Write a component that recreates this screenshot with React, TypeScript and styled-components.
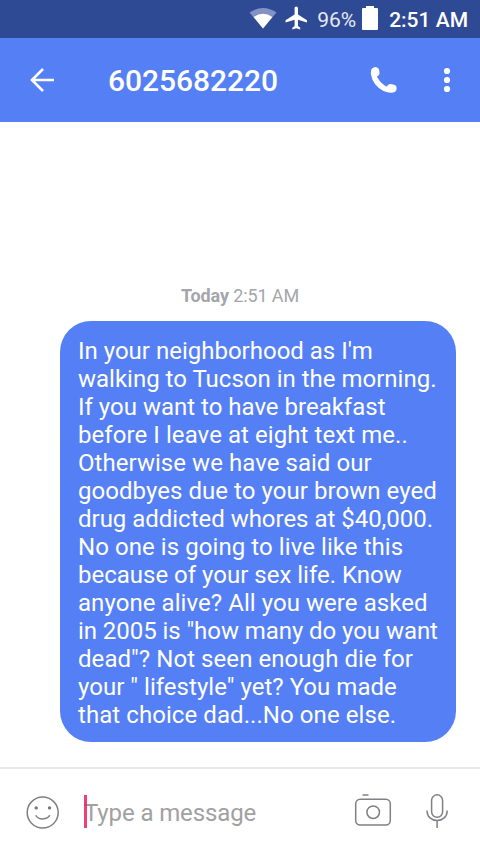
import React from "react";
import styled, { createGlobalStyle } from "styled-components";

const GlobalStyle = createGlobalStyle`
  * { box-sizing: border-box; }
  body { margin: 0; background: #fff; font-family: Roboto, "Liberation Sans", sans-serif; }
`;

const Screen = styled.div`
  width: 480px;
  height: 854px;
  display: flex;
  flex-direction: column;
  background: #fff;
  overflow: hidden;
`;

const StatusBar = styled.div`
  height: 38px;
  flex: none;
  display: flex;
  align-items: center;
  justify-content: flex-end;
  padding: 0 12px 2px 0;
  background: #2f4a95;
  color: #fff;
`;

const StatusText = styled.span<{ $strong?: boolean }>`
  height: 36px;
  padding-top: 2px;
  font-size: 21px;
  line-height: 36px;
  font-weight: ${(p) => (p.$strong ? 500 : 400)};
  opacity: ${(p) => (p.$strong ? 1 : 0.88)};
  white-space: nowrap;
`;

const Icon = styled.svg<{ $right?: number }>`
  display: block;
  flex: none;
  margin-right: ${(p) => p.$right ?? 0}px;
`;

const Header = styled.header`
  height: 84px;
  flex: none;
  display: flex;
  align-items: center;
  padding: 0 27px;
  background: #5580f5;
  color: #fff;
`;

const Title = styled.h1`
  flex: 1;
  margin: 0 0 0 51px;
  font-size: 30px;
  line-height: 36px;
  font-weight: 500;
  letter-spacing: -0.06px;
  padding-top: 1px;
`;

const Conversation = styled.main`
  flex: 1;
  display: flex;
  flex-direction: column;
  justify-content: flex-end;
  padding: 0 24px 25px 60px;
`;

const Timestamp = styled.div`
  margin: 0 24px 14px -12px;
  text-align: center;
  font-size: 18px;
  line-height: 22px;
  letter-spacing: -0.12px;
  color: #a4a6aa;
`;

const Bubble = styled.div`
  height: 421px;
  padding: 16px 0 13px 18px;
  border-radius: 31px;
  background: #5580f5;
  color: #fff;
`;

const Line = styled.div<{ $tracking: number }>`
  font-size: 24px;
  line-height: 28px;
  letter-spacing: ${(p) => p.$tracking}px;
  white-space: pre;
`;

const Composer = styled.footer`
  height: 87px;
  flex: none;
  display: flex;
  align-items: center;
  border-top: 2px solid #e9e9e9;
  padding: 0 31px 0 26px;
`;

const MessageField = styled.div`
  flex: 1;
  position: relative;
  margin-left: 24px;
  padding-top: 4px;
  font-size: 24px;
  line-height: 33px;
  letter-spacing: -0.12px;
  color: #a1a1a1;
`;

const Caret = styled.span`
  position: absolute;
  left: 0;
  top: 2px;
  width: 3px;
  height: 33px;
  background: #e91e63;
  opacity: 0.85;
`;

const lines: [string, number][] = [
  ["In your neighborhood as I'm", 0],
  ["walking to Tucson in the morning.", 0],
  ["If you want to have breakfast", 0],
  ["before I leave at eight text me..", 0.07],
  ["Otherwise we have said our", 0.05],
  ["goodbyes due to your brown eyed", 0.05],
  ["drug addicted whores at $40,000.", -0.02],
  ["No one is going to live like this", 0.07],
  ["because of your sex life. Know", 0],
  ["anyone alive? All you were asked", 0.06],
  ["in 2005 is \"how many do you want", -0.06],
  ["dead\"? Not seen enough die for", 0.06],
  ["your \" lifestyle\" yet? You made", 0.03],
  ["that choice dad...No one else.", 0.07],
];

export default function App() {
  return (
    <>
      <GlobalStyle />
      <Screen>
        <StatusBar>
          <Icon $right={8} width="28" height="24" viewBox="0 -1 28 24">
            <path d="M14 21.500 L.5 5.500 Q14-3.500 27.500 5.500Z" fill="#8392c4" />
            <path d="M14 21.500 L4.600 10 Q14 3.500 23.400 10Z" fill="#fff" />
          </Icon>
          <Icon $right={10} width="22" height="24" viewBox="1.500 1.500 19.500 21" preserveAspectRatio="none" fill="#fff">
            <path d="M21 16v-2l-8-5V3.500c0-.83-.67-1.500-1.500-1.500S10 2.670 10 3.500V9l-8 5v2l8-2.500V19l-2 1.500V22l3.500-1 3.500 1v-1.500L13 19v-5.500l8 2.500z" />
          </Icon>
          <StatusText>96%</StatusText>
          <Icon $right={11} width="22" height="24" viewBox="-6 0 22 24">
            <path d="M4 0h8v2h3q1 0 1 1v20q0 1-1 1H1q-1 0-1-1V3q0-1 1-1h3z" fill="#fff" />
          </Icon>
          <StatusText $strong>2:51 AM</StatusText>
        </StatusBar>

        <Header>
          <Icon width="30" height="30" viewBox="0 0 30 30" fill="none" stroke="#fff" strokeWidth="2.600">
            <path d="M27 15H5M16 4L5 15l11 11" />
          </Icon>
          <Title>6025682220</Title>
          <Icon $right={43} width="28" height="28" viewBox="0 0 28 28">
            <path
              d="M1.800 2.800Q5.500-.8 8.500 2.500Q10 5.500 9.200 8.500Q8.600 10 6.900 10.300Q9.400 16.500 16.600 20.800Q17.500 18.500 20 18Q24 18.200 26 19.800Q27.600 23.500 25 26Q20 28 13.500 25Q3 19.500 1.100 9Q.4 4.800 1.800 2.800Z"
              fill="#fff"
            />
          </Icon>
          <Icon width="12" height="28" viewBox="0 0 12 28" fill="#fff">
            <circle cx="6" cy="5" r="3.100" />
            <circle cx="6" cy="14" r="3.100" />
            <circle cx="6" cy="23" r="3.100" />
          </Icon>
        </Header>

        <Conversation>
          <Timestamp>
            <b>Today</b> 2:51 AM
          </Timestamp>
          <Bubble>
            {lines.map(([text, tracking]) => (
              <Line key={text} $tracking={tracking}>
                {text}
              </Line>
            ))}
          </Bubble>
        </Conversation>

        <Composer>
          <Icon width="34" height="34" viewBox="0 0 34 34" fill="none" stroke="#808084" strokeWidth="1.500">
            <circle cx="16.700" cy="17.600" r="15.500" />
            <path d="M9.800 20.200Q11.500 23.900 16.700 23.900T23.800 20.200" />
            <circle cx="10.200" cy="12.900" r="1.700" fill="#77777b" stroke="none" />
            <circle cx="23.500" cy="12.900" r="1.700" fill="#77777b" stroke="none" />
          </Icon>
          <MessageField>
            Type a message
            <Caret />
          </MessageField>
          <Icon $right={33} width="38" height="36" viewBox="0 0 38 36" fill="none" stroke="#808084" strokeWidth="1.500">
            <rect x="1.700" y="5.200" width="34.600" height="25.800" rx="4.500" />
            <circle cx="19.200" cy="18.200" r="6.300" />
            <path d="M8.500 1h6" />
          </Icon>
          <Icon width="24" height="36" viewBox="0 0 24 36" fill="none" stroke="#808084" strokeWidth="1.500">
            <rect x="6.600" y=".8" width="11" height="22.500" rx="5.500" />
            <path d="M2.100 16.500v1a10 9 0 0 0 20 0v-1M12.100 26.500V34" />
          </Icon>
        </Composer>
      </Screen>
    </>
  );
}
